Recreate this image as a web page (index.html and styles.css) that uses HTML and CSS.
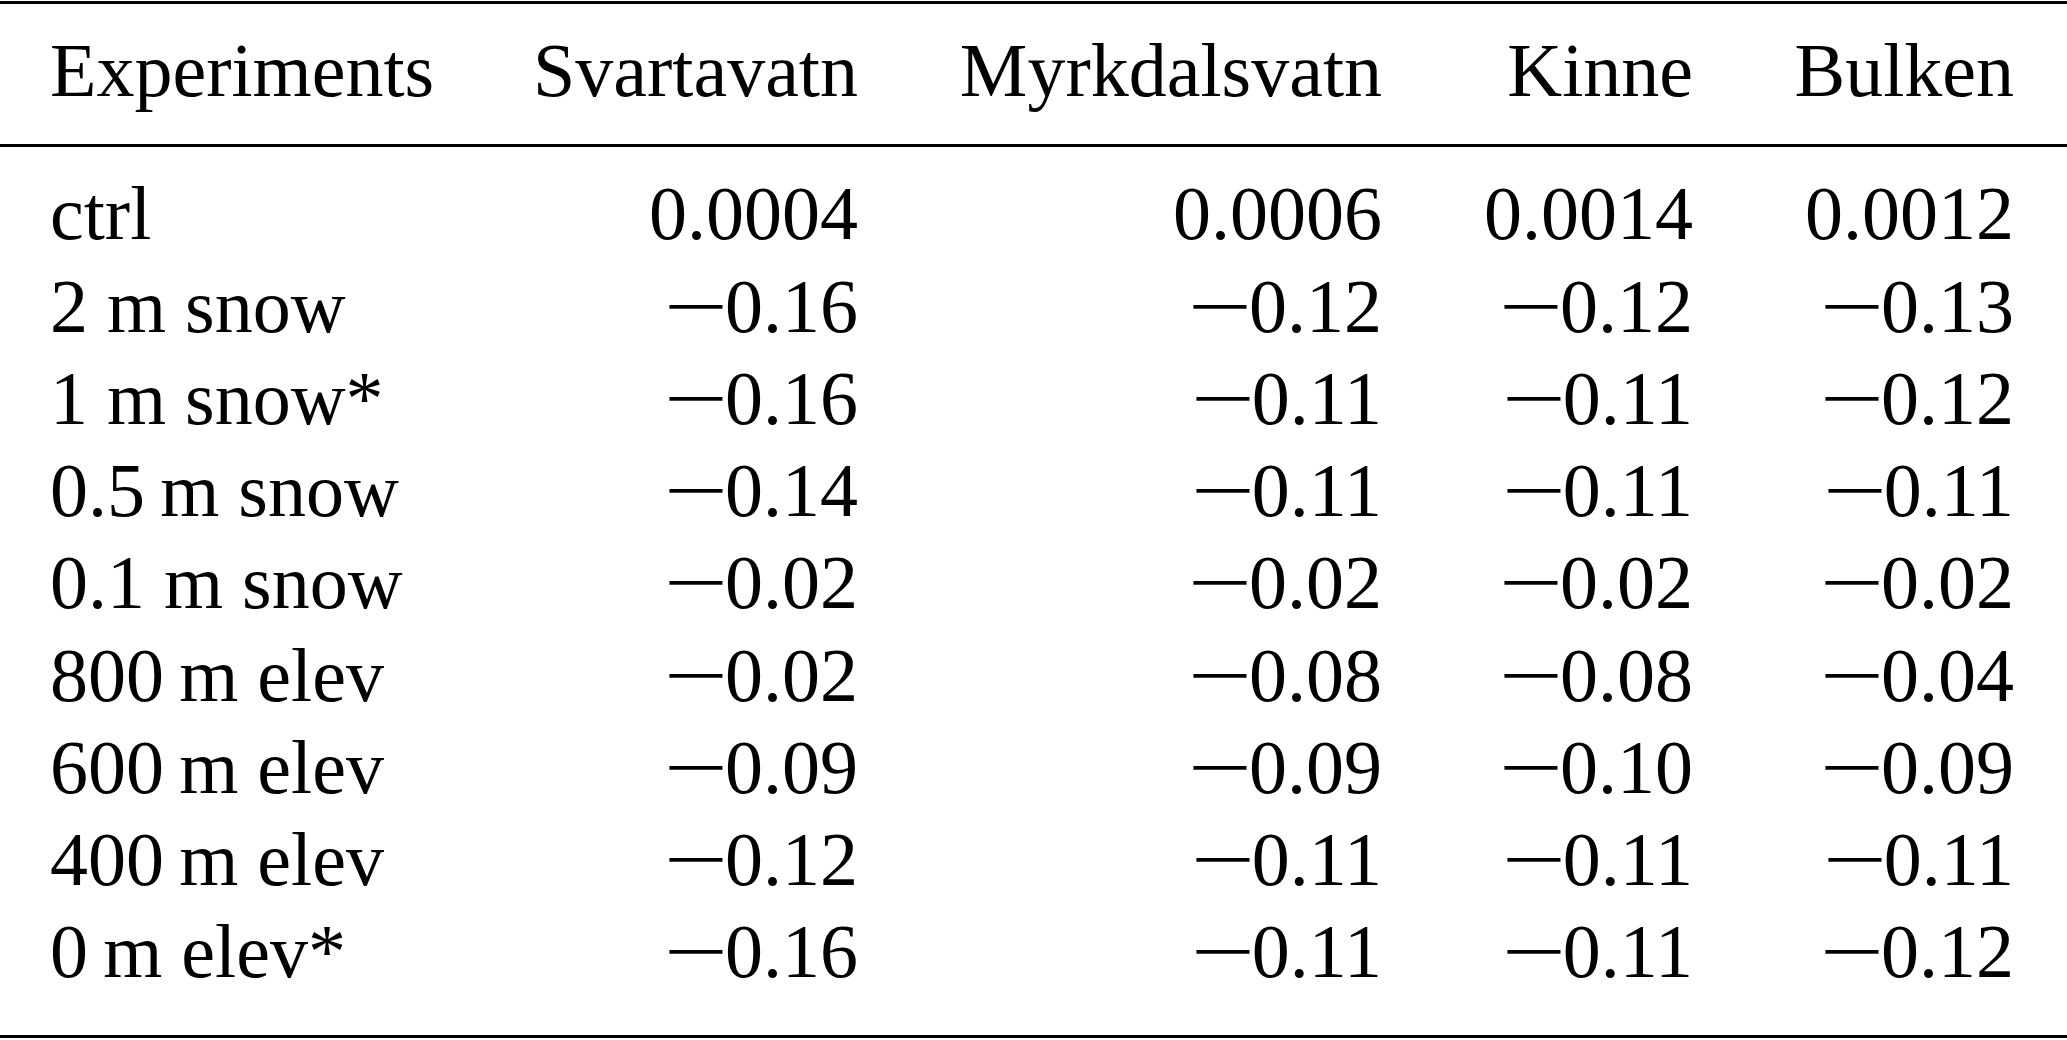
FILE: index.html
```html
<!DOCTYPE html>
<html>
<head>
<meta charset="utf-8">
<link rel="stylesheet" href="styles.css">
</head>
<body>
<div class="tbl">
  <div class="c l h">Experiments</div>
  <div class="c h">Svartavatn</div>
  <div class="c h">Myrkdalsvatn</div>
  <div class="c h">Kinne</div>
  <div class="c h">Bulken</div>
  <div class="mid"></div>

  <div class="c l first">ctrl</div><div class="c first">0.0004</div><div class="c first">0.0006</div><div class="c first">0.0014</div><div class="c first">0.0012</div>
  <div class="c l">2 m snow</div><div class="c"><span class="m">−</span>0.16</div><div class="c"><span class="m">−</span>0.12</div><div class="c"><span class="m">−</span>0.12</div><div class="c"><span class="m">−</span>0.13</div>
  <div class="c l">1 m snow*</div><div class="c"><span class="m">−</span>0.16</div><div class="c"><span class="m">−</span>0.11</div><div class="c"><span class="m">−</span>0.11</div><div class="c"><span class="m">−</span>0.12</div>
  <div class="c l">0.5&#8201;m snow</div><div class="c"><span class="m">−</span>0.14</div><div class="c"><span class="m">−</span>0.11</div><div class="c"><span class="m">−</span>0.11</div><div class="c"><span class="m">−</span>0.11</div>
  <div class="c l">0.1 m snow</div><div class="c"><span class="m">−</span>0.02</div><div class="c"><span class="m">−</span>0.02</div><div class="c"><span class="m">−</span>0.02</div><div class="c"><span class="m">−</span>0.02</div>
  <div class="c l">800&#8201;m elev</div><div class="c"><span class="m">−</span>0.02</div><div class="c"><span class="m">−</span>0.08</div><div class="c"><span class="m">−</span>0.08</div><div class="c"><span class="m">−</span>0.04</div>
  <div class="c l">600&#8201;m elev</div><div class="c"><span class="m">−</span>0.09</div><div class="c"><span class="m">−</span>0.09</div><div class="c"><span class="m">−</span>0.10</div><div class="c"><span class="m">−</span>0.09</div>
  <div class="c l">400&#8201;m elev</div><div class="c"><span class="m">−</span>0.12</div><div class="c"><span class="m">−</span>0.11</div><div class="c"><span class="m">−</span>0.11</div><div class="c"><span class="m">−</span>0.11</div>
  <div class="c l last">0&#8201;m elev*</div><div class="c last"><span class="m">−</span>0.16</div><div class="c last"><span class="m">−</span>0.11</div><div class="c last"><span class="m">−</span>0.11</div><div class="c last"><span class="m">−</span>0.12</div>
</div>
</body>
</html>
```
FILE: styles.css
```css
html, body {
  margin: 0;
  padding: 0;
  background: #ffffff;
}
body {
  font-family: "Liberation Serif", "Times New Roman", serif;
  font-size: 76px;
  line-height: 92.25px;
  color: #000;
}
.tbl {
  display: grid;
  grid-template-columns: 386px 422px 524px 311px 321px;
  justify-content: start;
  padding: 0 53px 0 50px;
  border-top: 3px solid #000;
  border-bottom: 3px solid #000;
  margin-top: 1px;
  width: 2067px;
  box-sizing: border-box;
}
.c {
  text-align: right;
  white-space: nowrap;
}
.c.l {
  text-align: left;
}
.m {
  display: inline-block;
  transform: scaleX(1.5);
  transform-origin: 85% 50%;
}
.h {
  padding-top: 20px;
  padding-bottom: 28px;
}
.mid {
  grid-column: 1 / -1;
  height: 3px;
  background: #000;
  margin: 0 -53px 0 -50px;
}
.first {
  padding-top: 20px;
}
.last {
  padding-bottom: 37px;
}
```
